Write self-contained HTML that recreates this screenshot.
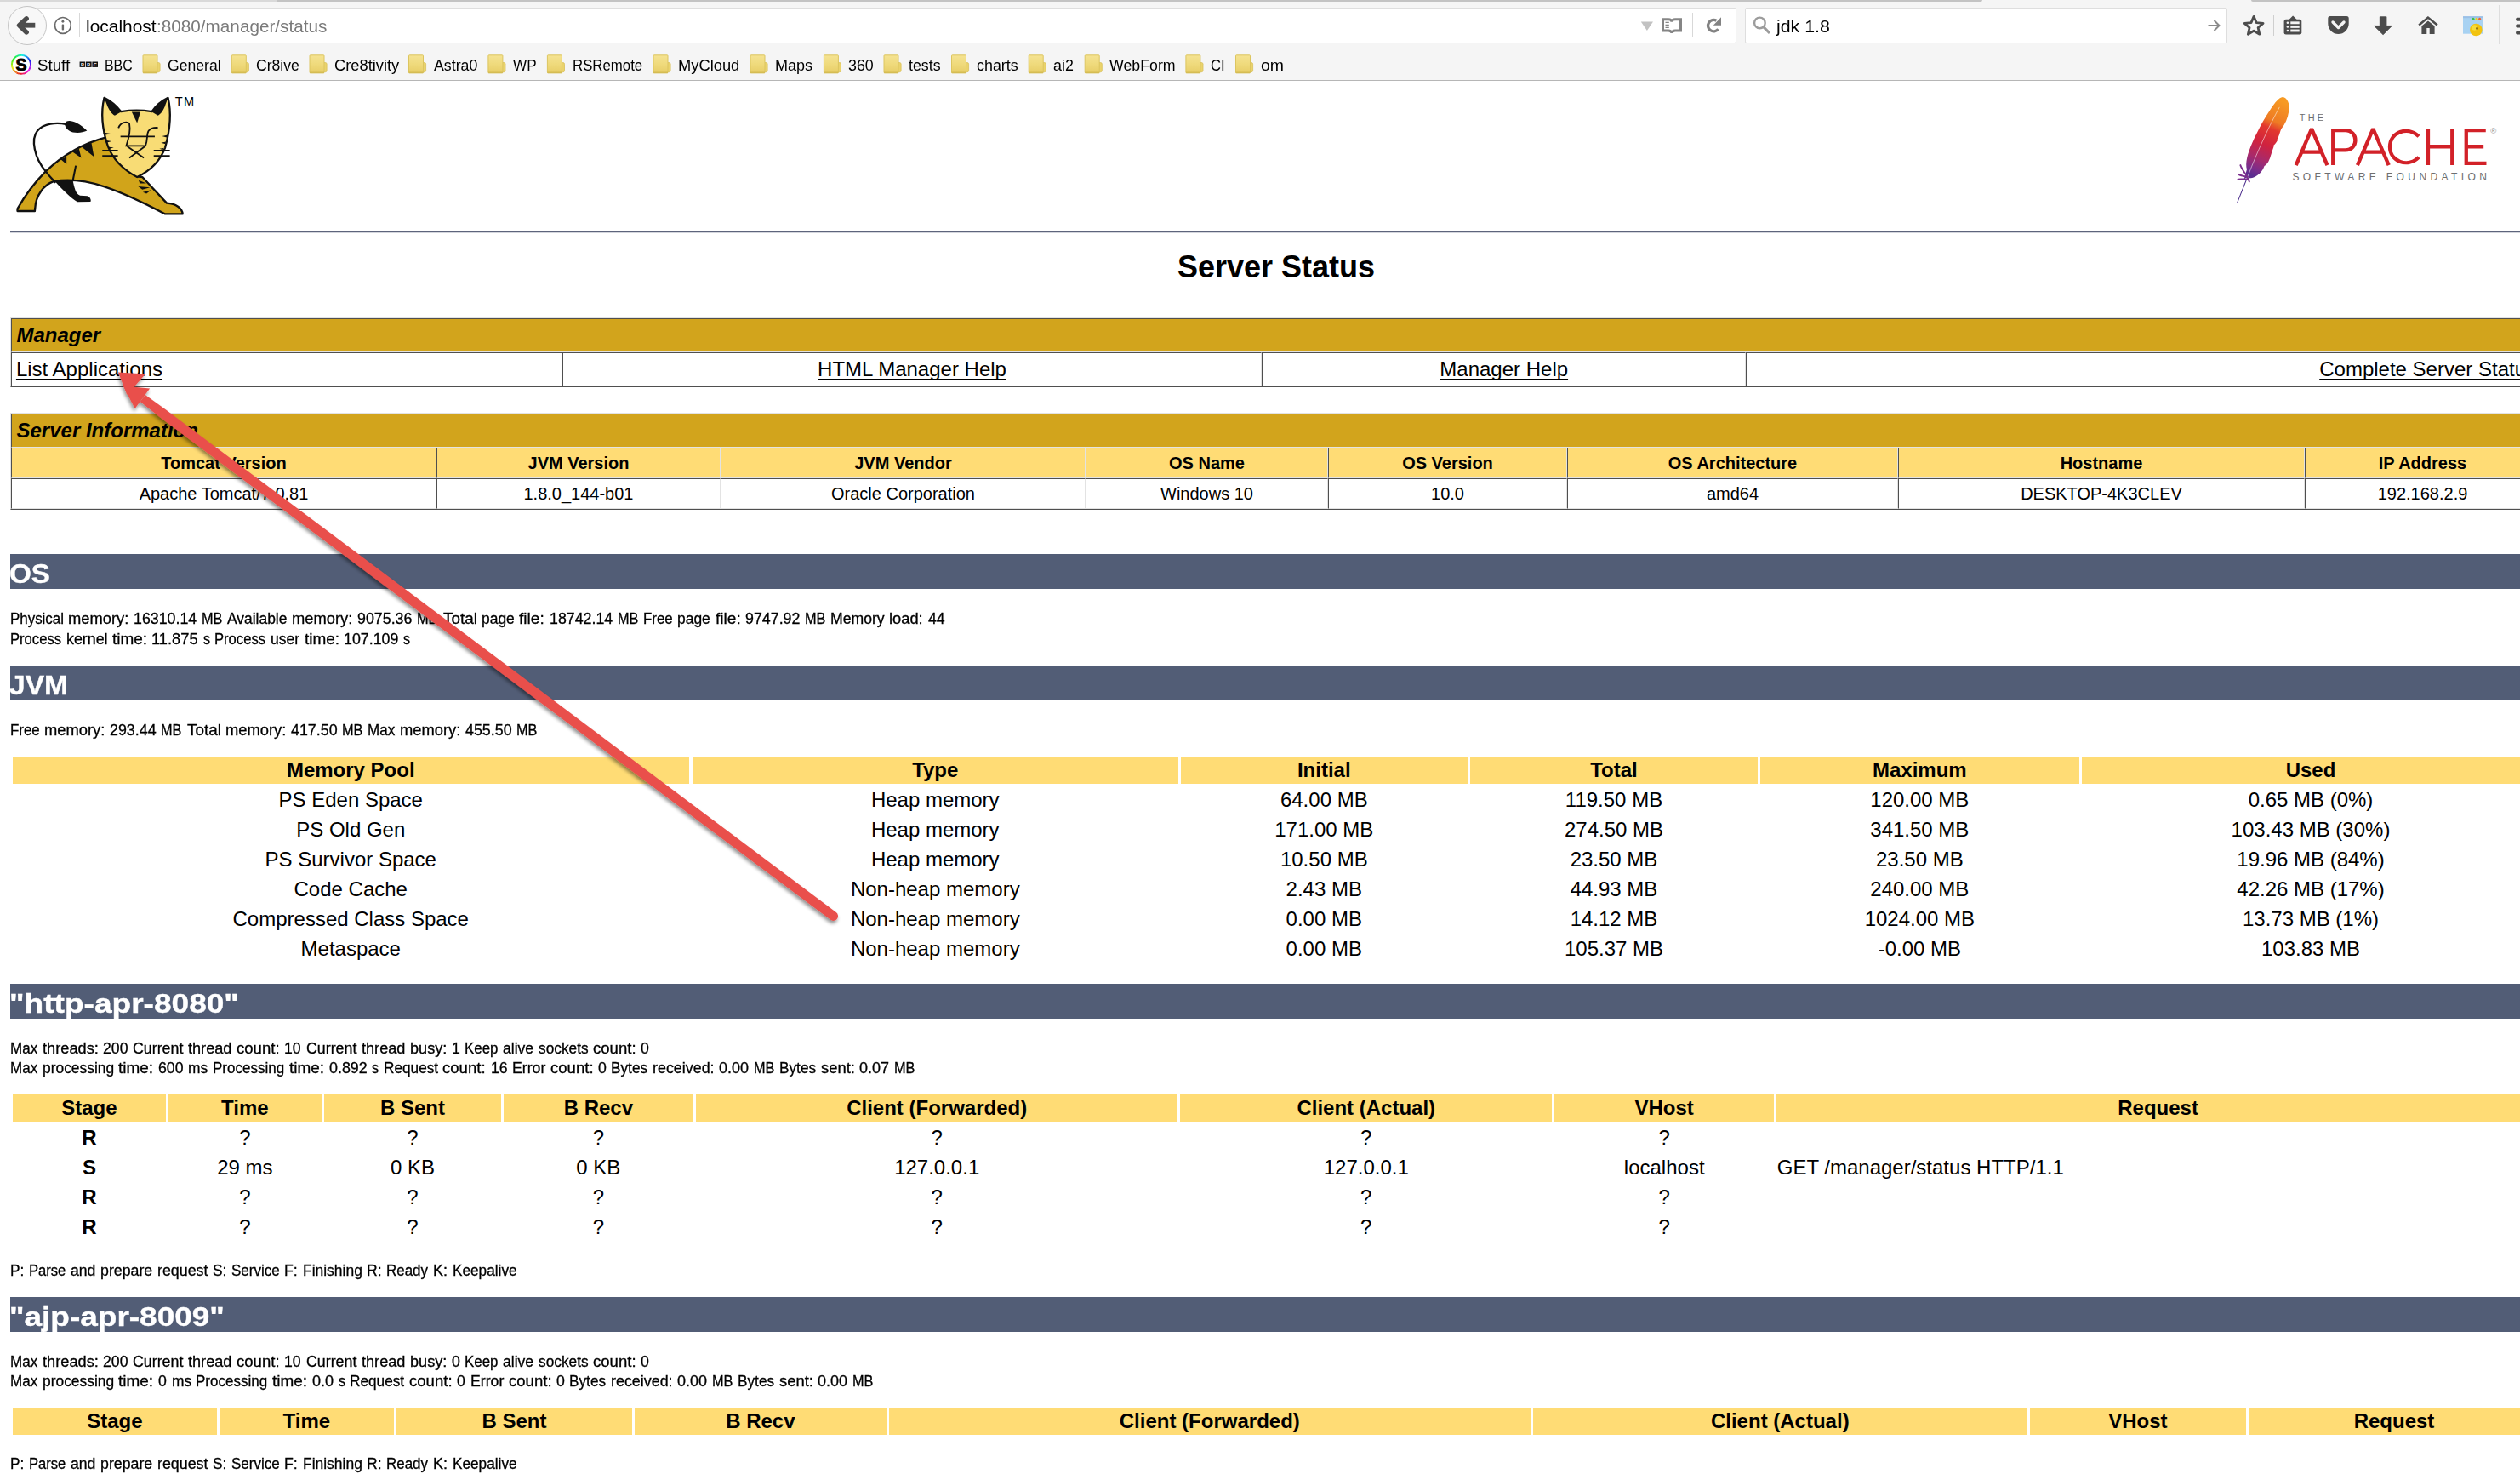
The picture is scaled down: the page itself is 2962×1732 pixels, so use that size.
<!DOCTYPE html>
<html><head><meta charset="utf-8"><title>/manager</title>
<style>
html,body{margin:0;padding:0;background:#fff;}
body{width:2962px;height:1732px;overflow:hidden;position:relative;font-family:"Liberation Sans", sans-serif;}
.b,.c,.tb,.t,svg{position:absolute;}
.b,.c,.tb{box-sizing:border-box;}
.c{border:1px solid;border-color:#4f4f4f #e3e3e3 #e3e3e3 #4f4f4f;}
.tb{border:1px solid;border-color:#e3e3e3 #4f4f4f #4f4f4f #e3e3e3;}
.t{white-space:pre;color:#000;text-decoration-skip-ink:none;text-underline-offset:3.3px;text-decoration-thickness:1.8px;}
</style></head><body>
<div class="b" style="left:0;top:0;width:2962px;height:94px;background:#f5f5f5"></div>
<div class="b" style="left:0;top:94px;width:2962px;height:1px;background:#b6b6b6"></div>
<div class="b" style="left:0;top:0;width:325px;height:2px;background:#d9d9d9"></div>
<div class="b" style="left:325px;top:0;width:2005px;height:2px;background:#c3c3c3;border-radius:0 0 14px 0"></div>
<div class="b" style="left:2646px;top:0;width:316px;height:2px;background:#c3c3c3;border-radius:0 0 0 14px"></div>
<div class="b" style="left:28px;top:9px;width:2013px;height:42px;background:#fff;border:1px solid #dedede;border-radius:2px"></div>
<div class="b" style="left:2050.5px;top:9px;width:567px;height:42px;background:#fff;border:1px solid #dedede;border-radius:2px"></div>
<div class="b" style="left:8.5px;top:6.5px;width:46px;height:46px;border-radius:50%;background:#f8f8f8;border:1px solid #c4c4c4"></div>
<svg width="2962" height="95" viewBox="0 0 2962 95" style="left:0;top:0">
<defs>
<linearGradient id="fg" x1="0" y1="0" x2="0" y2="1"><stop offset="0" stop-color="#f5e393"/><stop offset="0.5" stop-color="#efda7c"/><stop offset="1" stop-color="#e7cd66"/></linearGradient>
<linearGradient id="rb" x1="0" y1="0" x2="1" y2="1"><stop offset="0" stop-color="#35c46a"/><stop offset=".3" stop-color="#3b8cf0"/><stop offset=".55" stop-color="#a040e8"/><stop offset=".75" stop-color="#f0503c"/><stop offset="1" stop-color="#f4d21c"/></linearGradient>

</defs>
<path d="M41.3,29.7 H24" fill="none" stroke="#4c4c4c" stroke-width="5.8" stroke-linecap="butt"/>
<path d="M31.1,21.9 L22.6,29.7 L31.1,37.9" fill="none" stroke="#4c4c4c" stroke-width="5.6" stroke-linecap="round" stroke-linejoin="round"/>
<circle cx="73.9" cy="29.9" r="9.4" fill="none" stroke="#6a6a6a" stroke-width="1.7"/>
<circle cx="73.9" cy="25.2" r="1.45" fill="#6a6a6a"/><rect x="72.7" y="28.6" width="2.4" height="6.8" rx="1" fill="#6a6a6a"/>
<rect x="93" y="15" width="1" height="28" fill="#d8d8d8"/>
<rect x="1989" y="15" width="1" height="28" fill="#d8d8d8"/>
<path d="M1928.8,25.6 H1943 L1935.9,36 Z" fill="#c2c2c2"/>
<path d="M1954.5,22.8 H1961 Q1964.5,22.8 1965,25.5 Q1965.5,22.8 1969,22.8 H1975.5 V36 H1969 Q1965.8,36 1965,38.6 Q1964.2,36 1961,36 H1954.5 Z" fill="none" stroke="#858585" stroke-width="3" stroke-linejoin="miter" stroke-miterlimit="1.6"/>
<path d="M1957.5,26.3 H1961.8 M1957.5,29.4 H1961.8 M1957.5,32.4 H1961.8" stroke="#858585" stroke-width="1.3"/>
<path d="M2019.6,34.2 A6.7,6.7 0 1 1 2017.5,24.3" fill="none" stroke="#828282" stroke-width="3.3"/>
<path d="M2023,20.2 V29.7 H2013.8 Z" fill="#828282"/>
<circle cx="2068.4" cy="26.9" r="6.3" fill="none" stroke="#9c9c9c" stroke-width="2.4"/><path d="M2073,31.8 L2080,39" stroke="#9c9c9c" stroke-width="3.2"/>
<path d="M2595.5,30 H2608 M2602.5,24 L2608.5,30 L2602.5,36" fill="none" stroke="#8a8a8a" stroke-width="2"/>
<polygon points="2649.10,19.40 2652.22,26.61 2660.04,27.35 2654.14,32.54 2655.86,40.20 2649.10,36.20 2642.34,40.20 2644.06,32.54 2638.16,27.35 2645.98,26.61" fill="none" stroke="#4c4c4c" stroke-width="2.8" stroke-linejoin="round"/>
<rect x="2672" y="18" width="1" height="24" fill="#cfcfcf"/>
<path d="M2690.3,23.2 L2695.1,18.4 L2699.9,23.2 Z" fill="#4c4c4c"/><rect x="2684.6" y="22.8" width="20.7" height="17.6" rx="2.2" fill="#4c4c4c"/>
<circle cx="2688.9" cy="26.8" r="1.3" fill="#f5f5f5"/><rect x="2692.3" y="25.35" width="10.4" height="2.9" fill="#f5f5f5"/>
<circle cx="2688.9" cy="31.4" r="1.3" fill="#f5f5f5"/><rect x="2692.3" y="29.95" width="10.4" height="2.9" fill="#f5f5f5"/>
<circle cx="2688.9" cy="36.0" r="1.3" fill="#f5f5f5"/><rect x="2692.3" y="34.55" width="10.4" height="2.9" fill="#f5f5f5"/>
<path d="M2738.8,18.9 H2758.2 Q2760.7,18.9 2760.7,21.4 V27.8 A12.2,12.2 0 0 1 2736.3,27.8 V21.4 Q2736.3,18.9 2738.8,18.9 Z" fill="#4c4c4c"/>
<path d="M2742,26 L2748.5,32.5 L2755,26" fill="none" stroke="#f5f5f5" stroke-width="3.4" stroke-linecap="round" stroke-linejoin="round"/>
<path d="M2797.3,19.7 H2805 V30.4 H2811.4 L2801.1,40.8 L2790.6,30.4 H2797.3 Z" fill="#4c4c4c" stroke="#4c4c4c" stroke-width="0.8" stroke-linejoin="round"/>
<path d="M2843.2,29.6 L2853.9,20.6 L2864.8,29.6" fill="none" stroke="#4c4c4c" stroke-width="2.6" stroke-linejoin="miter"/>
<path d="M2846.4,30.6 L2853.9,24.4 L2861.6,30.6 V40.1 H2855.7 V33 H2852.3 V40.1 H2846.4 Z" fill="#4c4c4c"/>
<rect x="2895" y="19.2" width="24" height="20.5" fill="#a8d2f2"/><rect x="2895" y="19.2" width="24" height="2" fill="#9cc0e6"/>
<circle cx="2907" cy="22.3" r="1.5" fill="#3cbf4a"/><circle cx="2911" cy="22.3" r="1.5" fill="#f2d21a"/><circle cx="2914.6" cy="22.3" r="1.5" fill="#f06236"/>
<circle cx="2910.3" cy="35" r="7.3" fill="#f2c30f"/><circle cx="2908.5" cy="32.5" r="3.2" fill="#f7dc3a"/><circle cx="2911.5" cy="33.5" r="1.4" fill="#8a6a10"/>
<rect x="2937" y="6" width="1" height="46" fill="#dedede"/>
<rect x="2957" y="20.8" width="12" height="4" rx="2" fill="#4c4c4c"/>
<rect x="2957" y="28.6" width="12" height="4" rx="2" fill="#4c4c4c"/>
<rect x="2957" y="36.4" width="12" height="4" rx="2" fill="#4c4c4c"/>
<circle cx="25" cy="75.8" r="11" fill="#fff"/>
<path d="M24.89,64.80 A11,11 0 0 1 27.95,65.20" fill="none" stroke="hsl(178,85%,52%)" stroke-width="2"/>
<path d="M27.74,65.15 A11,11 0 0 1 30.59,66.33" fill="none" stroke="hsl(192,85%,52%)" stroke-width="2"/>
<path d="M30.40,66.22 A11,11 0 0 1 32.86,68.10" fill="none" stroke="hsl(208,85%,52%)" stroke-width="2"/>
<path d="M32.70,67.94 A11,11 0 0 1 34.58,70.40" fill="none" stroke="hsl(222,85%,52%)" stroke-width="2"/>
<path d="M34.47,70.21 A11,11 0 0 1 35.65,73.06" fill="none" stroke="hsl(238,85%,52%)" stroke-width="2"/>
<path d="M35.60,72.85 A11,11 0 0 1 36.00,75.91" fill="none" stroke="hsl(252,85%,52%)" stroke-width="2"/>
<path d="M36.00,75.69 A11,11 0 0 1 35.60,78.75" fill="none" stroke="hsl(268,85%,52%)" stroke-width="2"/>
<path d="M35.65,78.54 A11,11 0 0 1 34.47,81.39" fill="none" stroke="hsl(282,85%,52%)" stroke-width="2"/>
<path d="M34.58,81.20 A11,11 0 0 1 32.70,83.66" fill="none" stroke="hsl(298,85%,52%)" stroke-width="2"/>
<path d="M32.86,83.50 A11,11 0 0 1 30.40,85.38" fill="none" stroke="hsl(312,85%,52%)" stroke-width="2"/>
<path d="M30.59,85.27 A11,11 0 0 1 27.74,86.45" fill="none" stroke="hsl(328,85%,52%)" stroke-width="2"/>
<path d="M27.95,86.40 A11,11 0 0 1 24.89,86.80" fill="none" stroke="hsl(342,85%,52%)" stroke-width="2"/>
<path d="M25.11,86.80 A11,11 0 0 1 22.05,86.40" fill="none" stroke="hsl(358,85%,52%)" stroke-width="2"/>
<path d="M22.26,86.45 A11,11 0 0 1 19.41,85.27" fill="none" stroke="hsl(12,85%,52%)" stroke-width="2"/>
<path d="M19.60,85.38 A11,11 0 0 1 17.14,83.50" fill="none" stroke="hsl(28,85%,52%)" stroke-width="2"/>
<path d="M17.30,83.66 A11,11 0 0 1 15.42,81.20" fill="none" stroke="hsl(42,85%,52%)" stroke-width="2"/>
<path d="M15.53,81.39 A11,11 0 0 1 14.35,78.54" fill="none" stroke="hsl(58,85%,52%)" stroke-width="2"/>
<path d="M14.40,78.75 A11,11 0 0 1 14.00,75.69" fill="none" stroke="hsl(72,85%,52%)" stroke-width="2"/>
<path d="M14.00,75.91 A11,11 0 0 1 14.40,72.85" fill="none" stroke="hsl(88,85%,52%)" stroke-width="2"/>
<path d="M14.35,73.06 A11,11 0 0 1 15.53,70.21" fill="none" stroke="hsl(102,85%,52%)" stroke-width="2"/>
<path d="M15.42,70.40 A11,11 0 0 1 17.30,67.94" fill="none" stroke="hsl(118,85%,52%)" stroke-width="2"/>
<path d="M17.14,68.10 A11,11 0 0 1 19.60,66.22" fill="none" stroke="hsl(132,85%,52%)" stroke-width="2"/>
<path d="M19.41,66.33 A11,11 0 0 1 22.26,65.15" fill="none" stroke="hsl(148,85%,52%)" stroke-width="2"/>
<path d="M22.05,65.20 A11,11 0 0 1 25.11,64.80" fill="none" stroke="hsl(162,85%,52%)" stroke-width="2"/>
<text x="25" y="82.6" font-family="Liberation Sans, sans-serif" font-weight="700" font-size="19.5" text-anchor="middle" fill="#000" stroke="#000" stroke-width="0.9">S</text>
<rect x="93.6" y="72.5" width="6.6" height="6.4" fill="#111"/><text x="96.9" y="77.9" font-family="Liberation Sans, sans-serif" font-weight="700" font-size="5.6" text-anchor="middle" fill="#fff">B</text>
<rect x="101.0" y="72.5" width="6.6" height="6.4" fill="#111"/><text x="104.3" y="77.9" font-family="Liberation Sans, sans-serif" font-weight="700" font-size="5.6" text-anchor="middle" fill="#fff">B</text>
<rect x="108.4" y="72.5" width="6.6" height="6.4" fill="#111"/><text x="111.7" y="77.9" font-family="Liberation Sans, sans-serif" font-weight="700" font-size="5.6" text-anchor="middle" fill="#fff">C</text>
<g transform="translate(167.5,64.3)"><path d="M17,9.2 H18.8 Q20.6,9.2 20.6,11 V18.6 Q20.6,20.4 18.8,20.4 H17 Z" fill="#ead36c" stroke="#d9c05a" stroke-width="0.8"/><rect x="0.5" y="0.5" width="17" height="21" rx="0.8" fill="url(#fg)" stroke="#dcc560" stroke-width="1"/><rect x="0.5" y="20.2" width="17" height="1.6" fill="#d2b84e" opacity=".8"/></g>
<g transform="translate(271.8,64.3)"><path d="M17,9.2 H18.8 Q20.6,9.2 20.6,11 V18.6 Q20.6,20.4 18.8,20.4 H17 Z" fill="#ead36c" stroke="#d9c05a" stroke-width="0.8"/><rect x="0.5" y="0.5" width="17" height="21" rx="0.8" fill="url(#fg)" stroke="#dcc560" stroke-width="1"/><rect x="0.5" y="20.2" width="17" height="1.6" fill="#d2b84e" opacity=".8"/></g>
<g transform="translate(363.5,64.3)"><path d="M17,9.2 H18.8 Q20.6,9.2 20.6,11 V18.6 Q20.6,20.4 18.8,20.4 H17 Z" fill="#ead36c" stroke="#d9c05a" stroke-width="0.8"/><rect x="0.5" y="0.5" width="17" height="21" rx="0.8" fill="url(#fg)" stroke="#dcc560" stroke-width="1"/><rect x="0.5" y="20.2" width="17" height="1.6" fill="#d2b84e" opacity=".8"/></g>
<g transform="translate(480.0,64.3)"><path d="M17,9.2 H18.8 Q20.6,9.2 20.6,11 V18.6 Q20.6,20.4 18.8,20.4 H17 Z" fill="#ead36c" stroke="#d9c05a" stroke-width="0.8"/><rect x="0.5" y="0.5" width="17" height="21" rx="0.8" fill="url(#fg)" stroke="#dcc560" stroke-width="1"/><rect x="0.5" y="20.2" width="17" height="1.6" fill="#d2b84e" opacity=".8"/></g>
<g transform="translate(573.4,64.3)"><path d="M17,9.2 H18.8 Q20.6,9.2 20.6,11 V18.6 Q20.6,20.4 18.8,20.4 H17 Z" fill="#ead36c" stroke="#d9c05a" stroke-width="0.8"/><rect x="0.5" y="0.5" width="17" height="21" rx="0.8" fill="url(#fg)" stroke="#dcc560" stroke-width="1"/><rect x="0.5" y="20.2" width="17" height="1.6" fill="#d2b84e" opacity=".8"/></g>
<g transform="translate(642.9,64.3)"><path d="M17,9.2 H18.8 Q20.6,9.2 20.6,11 V18.6 Q20.6,20.4 18.8,20.4 H17 Z" fill="#ead36c" stroke="#d9c05a" stroke-width="0.8"/><rect x="0.5" y="0.5" width="17" height="21" rx="0.8" fill="url(#fg)" stroke="#dcc560" stroke-width="1"/><rect x="0.5" y="20.2" width="17" height="1.6" fill="#d2b84e" opacity=".8"/></g>
<g transform="translate(767.5,64.3)"><path d="M17,9.2 H18.8 Q20.6,9.2 20.6,11 V18.6 Q20.6,20.4 18.8,20.4 H17 Z" fill="#ead36c" stroke="#d9c05a" stroke-width="0.8"/><rect x="0.5" y="0.5" width="17" height="21" rx="0.8" fill="url(#fg)" stroke="#dcc560" stroke-width="1"/><rect x="0.5" y="20.2" width="17" height="1.6" fill="#d2b84e" opacity=".8"/></g>
<g transform="translate(881.5,64.3)"><path d="M17,9.2 H18.8 Q20.6,9.2 20.6,11 V18.6 Q20.6,20.4 18.8,20.4 H17 Z" fill="#ead36c" stroke="#d9c05a" stroke-width="0.8"/><rect x="0.5" y="0.5" width="17" height="21" rx="0.8" fill="url(#fg)" stroke="#dcc560" stroke-width="1"/><rect x="0.5" y="20.2" width="17" height="1.6" fill="#d2b84e" opacity=".8"/></g>
<g transform="translate(967.9,64.3)"><path d="M17,9.2 H18.8 Q20.6,9.2 20.6,11 V18.6 Q20.6,20.4 18.8,20.4 H17 Z" fill="#ead36c" stroke="#d9c05a" stroke-width="0.8"/><rect x="0.5" y="0.5" width="17" height="21" rx="0.8" fill="url(#fg)" stroke="#dcc560" stroke-width="1"/><rect x="0.5" y="20.2" width="17" height="1.6" fill="#d2b84e" opacity=".8"/></g>
<g transform="translate(1038.5,64.3)"><path d="M17,9.2 H18.8 Q20.6,9.2 20.6,11 V18.6 Q20.6,20.4 18.8,20.4 H17 Z" fill="#ead36c" stroke="#d9c05a" stroke-width="0.8"/><rect x="0.5" y="0.5" width="17" height="21" rx="0.8" fill="url(#fg)" stroke="#dcc560" stroke-width="1"/><rect x="0.5" y="20.2" width="17" height="1.6" fill="#d2b84e" opacity=".8"/></g>
<g transform="translate(1118.0,64.3)"><path d="M17,9.2 H18.8 Q20.6,9.2 20.6,11 V18.6 Q20.6,20.4 18.8,20.4 H17 Z" fill="#ead36c" stroke="#d9c05a" stroke-width="0.8"/><rect x="0.5" y="0.5" width="17" height="21" rx="0.8" fill="url(#fg)" stroke="#dcc560" stroke-width="1"/><rect x="0.5" y="20.2" width="17" height="1.6" fill="#d2b84e" opacity=".8"/></g>
<g transform="translate(1208.7,64.3)"><path d="M17,9.2 H18.8 Q20.6,9.2 20.6,11 V18.6 Q20.6,20.4 18.8,20.4 H17 Z" fill="#ead36c" stroke="#d9c05a" stroke-width="0.8"/><rect x="0.5" y="0.5" width="17" height="21" rx="0.8" fill="url(#fg)" stroke="#dcc560" stroke-width="1"/><rect x="0.5" y="20.2" width="17" height="1.6" fill="#d2b84e" opacity=".8"/></g>
<g transform="translate(1274.7,64.3)"><path d="M17,9.2 H18.8 Q20.6,9.2 20.6,11 V18.6 Q20.6,20.4 18.8,20.4 H17 Z" fill="#ead36c" stroke="#d9c05a" stroke-width="0.8"/><rect x="0.5" y="0.5" width="17" height="21" rx="0.8" fill="url(#fg)" stroke="#dcc560" stroke-width="1"/><rect x="0.5" y="20.2" width="17" height="1.6" fill="#d2b84e" opacity=".8"/></g>
<g transform="translate(1393.4,64.3)"><path d="M17,9.2 H18.8 Q20.6,9.2 20.6,11 V18.6 Q20.6,20.4 18.8,20.4 H17 Z" fill="#ead36c" stroke="#d9c05a" stroke-width="0.8"/><rect x="0.5" y="0.5" width="17" height="21" rx="0.8" fill="url(#fg)" stroke="#dcc560" stroke-width="1"/><rect x="0.5" y="20.2" width="17" height="1.6" fill="#d2b84e" opacity=".8"/></g>
<g transform="translate(1452.0,64.3)"><path d="M17,9.2 H18.8 Q20.6,9.2 20.6,11 V18.6 Q20.6,20.4 18.8,20.4 H17 Z" fill="#ead36c" stroke="#d9c05a" stroke-width="0.8"/><rect x="0.5" y="0.5" width="17" height="21" rx="0.8" fill="url(#fg)" stroke="#dcc560" stroke-width="1"/><rect x="0.5" y="20.2" width="17" height="1.6" fill="#d2b84e" opacity=".8"/></g>
</svg>
<div class="b" style="left:12px;top:272px;width:2978px;height:1px;background:#5d647c"></div>
<div class="b" style="left:12px;top:273px;width:2978px;height:1px;background:#d4d6dd"></div>
<svg width="300" height="180" viewBox="0 0 2457 1474" style="left:0;top:100px">
<path d="M625,370 C635,325 730,330 838,438 C760,475 635,465 622,372 Z" fill="#111"/>
<path d="M520,915 L700,912 C715,990 730,1050 770,1062 L840,1066 C875,1075 880,1120 870,1122 L745,1125 C690,1090 600,1010 520,915 Z" fill="#111"/>
<path d="M1015,505 C800,560 600,680 440,830 C330,940 230,1080 168,1190 L168,1212 L335,1212 L338,1185 C345,1060 420,960 520,925 C640,905 800,910 1000,975 C1200,1040 1400,1140 1590,1240 L1758,1240 C1755,1190 1700,1140 1605,1135 L1370,885 L1320,880 Z" fill="#D1A41A" stroke="#111" stroke-width="19" stroke-linejoin="round"/>
<path d="M535,940 C500,900 470,870 440,830 C330,700 295,520 360,440 C420,370 540,355 640,378" fill="none" stroke="#111" stroke-width="19"/>
<path d="M780,590 L880,555 L905,690 Z M695,640 L760,612 L782,700 Z M585,715 L640,690 L640,762 Z" fill="#111"/>
<path d="M730,775 L700,925" stroke="#111" stroke-width="17" fill="none"/>
<path d="M1335,915 L1410,945 L1345,945 Z M1330,975 L1445,985 L1370,1005 Z M1375,1030 L1455,1010 L1410,1045 Z" fill="#111"/>
<path d="M1003,122 C1060,150 1120,200 1165,255 C1260,240 1370,240 1462,255 C1500,200 1560,150 1618,122 C1650,260 1640,420 1590,600 C1540,740 1430,830 1320,885 C1200,820 1090,720 1040,590 C985,430 970,260 1003,122 Z" fill="#F8DC75" stroke="#111" stroke-width="19" stroke-linejoin="round"/>
<path d="M1006,128 C1070,160 1125,205 1165,258 L1105,292 C1075,280 1045,230 1030,190 Z" fill="#111"/>
<path d="M1615,128 C1555,160 1500,205 1462,258 L1520,292 C1550,280 1580,230 1592,190 Z" fill="#111"/>
<path d="M1268,258 L1352,258 L1320,365 Z" fill="#111"/>
<path d="M1140,412 C1160,360 1220,345 1245,370 C1255,420 1245,500 1215,585 L1400,585 C1425,520 1410,470 1430,440 C1450,415 1490,408 1520,410" fill="none" stroke="#111" stroke-width="15"/>
<path d="M1160,495 H1490" stroke="#111" stroke-width="15"/>
<path d="M1225,590 L1385,700 M1395,590 L1245,700" stroke="#111" stroke-width="15"/>
<path d="M985,630 H1135 M985,682 H1135 M1480,630 H1635 M1480,682 H1635" stroke="#111" stroke-width="15"/>
<path d="M995,455 L1075,468 L1000,482 Z M1015,530 L1075,540 L1022,555 Z M1045,595 L1095,600 L1055,615 Z M1615,480 L1560,492 L1612,505 Z M1598,545 L1550,555 L1592,568 Z M1575,605 L1535,612 L1568,625 Z" fill="#111"/>
</svg>
<span class="t" style="left:205.8px;top:110.5px;font-size:14.6px;line-height:16px;letter-spacing:1.2px">TM</span>
<svg width="362" height="160" viewBox="0 0 2520 1114" style="left:2600px;top:100px">
<defs><linearGradient id="fe" x1="0.62" y1="0" x2="0.38" y2="1">
<stop offset="0" stop-color="#F79A23"/><stop offset="0.27" stop-color="#EE7A24"/><stop offset="0.37" stop-color="#E2372E"/><stop offset="0.58" stop-color="#D0223F"/><stop offset="0.78" stop-color="#A72A6C"/><stop offset="0.92" stop-color="#7A2D8C"/><stop offset="1" stop-color="#5B2E90"/></linearGradient></defs>
<path d="M582,97 C615,105 640,150 628,215 C620,270 598,320 565,360 L560,375 C545,420 540,440 528,450 L535,455 C520,480 510,490 498,498 L505,503 C490,540 480,590 462,625 C450,645 440,655 428,662 C415,700 390,735 340,755 C320,765 300,760 290,752 L262,770 L285,690 C270,640 290,560 330,470 C380,360 450,230 520,140 C545,110 565,95 582,97 Z" fill="url(#fe)"/>
<path d="M290,752 L205,965" stroke="#4B2D8C" stroke-width="7" stroke-linecap="round"/>
<path d="M552,180 C470,330 380,520 290,752" stroke="#fff" stroke-opacity=".75" stroke-width="5" fill="none"/>
<path d="M290,752 C270,720 245,690 232,655 M290,752 C260,745 235,740 215,730 M285,770 C260,770 235,768 212,770 M292,760 L305,790" stroke="#7B2F8E" stroke-width="13" fill="none" stroke-linecap="round"/>
<g fill="none" stroke="#D22128" stroke-width="30" stroke-linejoin="miter" stroke-miterlimit="2">
<path d="M687,655 L815,358 L943,655 M737,548 H893"/>
<path d="M990,655 V370 H1090 C1200,370 1200,532 1090,532 H990"/>
<path d="M1190,655 L1318,358 L1446,655 M1240,548 H1396"/>
<path d="M1692,420 C1600,330 1455,385 1455,505 C1455,625 1600,680 1692,590"/>
<path d="M1768,355 V655 M1965,355 V655 M1768,503 H1965"/>
<path d="M2240,370 H2080 V640 H2245 M2080,503 H2222"/>
</g>
<text x="716" y="295" font-family="Liberation Sans, sans-serif" font-size="76" letter-spacing="22" fill="#6e6e70">THE</text>
<text x="657" y="779" font-family="Liberation Sans, sans-serif" font-size="84" letter-spacing="30.4" fill="#6e6e70">SOFTWARE FOUNDATION</text>
<text x="2278" y="398" font-family="Liberation Sans, sans-serif" font-size="66" fill="#8a8a8a">®</text>
</svg>
<div class="tb" style="left:12px;top:373px;width:2978px;height:82px"></div>
<div class="c" style="left:13px;top:374px;width:2976px;height:40px;background:#D2A41C"></div>
<div class="c" style="left:13px;top:414px;width:648px;height:40px;background:#fff"></div>
<div class="c" style="left:661px;top:414px;width:822px;height:40px;background:#fff"></div>
<div class="c" style="left:1483px;top:414px;width:569px;height:40px;background:#fff"></div>
<div class="c" style="left:2052px;top:414px;width:937px;height:40px;background:#fff"></div>
<div class="tb" style="left:12px;top:485px;width:2978px;height:114px"></div>
<div class="c" style="left:13px;top:486px;width:2976px;height:40px;background:#D2A41C"></div>
<div class="c" style="left:13px;top:526px;width:500px;height:36px;background:#FFDC75"></div>
<div class="c" style="left:13px;top:562px;width:500px;height:36px;background:#fff"></div>
<div class="c" style="left:513px;top:526px;width:334px;height:36px;background:#FFDC75"></div>
<div class="c" style="left:513px;top:562px;width:334px;height:36px;background:#fff"></div>
<div class="c" style="left:847px;top:526px;width:429px;height:36px;background:#FFDC75"></div>
<div class="c" style="left:847px;top:562px;width:429px;height:36px;background:#fff"></div>
<div class="c" style="left:1276px;top:526px;width:285px;height:36px;background:#FFDC75"></div>
<div class="c" style="left:1276px;top:562px;width:285px;height:36px;background:#fff"></div>
<div class="c" style="left:1561px;top:526px;width:281px;height:36px;background:#FFDC75"></div>
<div class="c" style="left:1561px;top:562px;width:281px;height:36px;background:#fff"></div>
<div class="c" style="left:1842px;top:526px;width:389px;height:36px;background:#FFDC75"></div>
<div class="c" style="left:1842px;top:562px;width:389px;height:36px;background:#fff"></div>
<div class="c" style="left:2231px;top:526px;width:478px;height:36px;background:#FFDC75"></div>
<div class="c" style="left:2231px;top:562px;width:478px;height:36px;background:#fff"></div>
<div class="c" style="left:2709px;top:526px;width:280px;height:36px;background:#FFDC75"></div>
<div class="c" style="left:2709px;top:562px;width:280px;height:36px;background:#fff"></div>
<div class="b" style="left:12px;top:651px;width:2978px;height:41px;background:#525D76;"></div>
<div class="b" style="left:12px;top:782px;width:2978px;height:41px;background:#525D76;"></div>
<div class="b" style="left:12px;top:1156px;width:2978px;height:41px;background:#525D76;"></div>
<div class="b" style="left:12px;top:1524px;width:2978px;height:41px;background:#525D76;"></div>
<div class="b" style="left:15px;top:889px;width:795px;height:32px;background:#FFDC75;"></div>
<div class="b" style="left:814px;top:889px;width:571px;height:32px;background:#FFDC75;"></div>
<div class="b" style="left:1388px;top:889px;width:337px;height:32px;background:#FFDC75;"></div>
<div class="b" style="left:1728px;top:889px;width:338px;height:32px;background:#FFDC75;"></div>
<div class="b" style="left:2069px;top:889px;width:375px;height:32px;background:#FFDC75;"></div>
<div class="b" style="left:2447px;top:889px;width:538px;height:32px;background:#FFDC75;"></div>
<div class="b" style="left:15px;top:1286px;width:180px;height:32px;background:#FFDC75;"></div>
<div class="b" style="left:198px;top:1286px;width:180px;height:32px;background:#FFDC75;"></div>
<div class="b" style="left:381px;top:1286px;width:208px;height:32px;background:#FFDC75;"></div>
<div class="b" style="left:592px;top:1286px;width:223px;height:32px;background:#FFDC75;"></div>
<div class="b" style="left:818px;top:1286px;width:566px;height:32px;background:#FFDC75;"></div>
<div class="b" style="left:1387px;top:1286px;width:437px;height:32px;background:#FFDC75;"></div>
<div class="b" style="left:1827px;top:1286px;width:258px;height:32px;background:#FFDC75;"></div>
<div class="b" style="left:2088px;top:1286px;width:897px;height:32px;background:#FFDC75;"></div>
<div class="b" style="left:15px;top:1654px;width:240px;height:32px;background:#FFDC75;"></div>
<div class="b" style="left:258px;top:1654px;width:205px;height:32px;background:#FFDC75;"></div>
<div class="b" style="left:466px;top:1654px;width:277px;height:32px;background:#FFDC75;"></div>
<div class="b" style="left:746px;top:1654px;width:296px;height:32px;background:#FFDC75;"></div>
<div class="b" style="left:1045px;top:1654px;width:754px;height:32px;background:#FFDC75;"></div>
<div class="b" style="left:1802px;top:1654px;width:581px;height:32px;background:#FFDC75;"></div>
<div class="b" style="left:2386px;top:1654px;width:254px;height:32px;background:#FFDC75;"></div>
<div class="b" style="left:2643px;top:1654px;width:342px;height:32px;background:#FFDC75;"></div>
<span class="t" style="left:43.96px;top:66.36px;font-size:18.0px;line-height:23px;transform:scaleX(1.0386);transform-origin:0 50%;">Stuff</span>
<span class="t" style="left:123.09px;top:66.36px;font-size:18.0px;line-height:23px;transform:scaleX(0.8812);transform-origin:0 50%;">BBC</span>
<span class="t" style="left:196.81px;top:66.36px;font-size:18.0px;line-height:23px;transform:scaleX(0.9793);transform-origin:0 50%;">General</span>
<span class="t" style="left:300.81px;top:66.36px;font-size:18.0px;line-height:23px;transform:scaleX(0.9770);transform-origin:0 50%;">Cr8ive</span>
<span class="t" style="left:392.88px;top:66.36px;font-size:18.0px;line-height:23px;transform:scaleX(1.0161);transform-origin:0 50%;">Cre8tivity</span>
<span class="t" style="left:510.20px;top:66.36px;font-size:18.0px;line-height:23px;transform:scaleX(0.9863);transform-origin:0 50%;">Astra0</span>
<span class="t" style="left:603.23px;top:66.36px;font-size:18.0px;line-height:23px;transform:scaleX(0.9524);transform-origin:0 50%;">WP</span>
<span class="t" style="left:672.64px;top:66.36px;font-size:18.0px;line-height:23px;transform:scaleX(0.9340);transform-origin:0 50%;">RSRemote</span>
<span class="t" style="left:796.78px;top:66.36px;font-size:18.0px;line-height:23px;transform:scaleX(1.0181);transform-origin:0 50%;">MyCloud</span>
<span class="t" style="left:911.19px;top:66.36px;font-size:18.0px;line-height:23px;transform:scaleX(1.0024);transform-origin:0 50%;">Maps</span>
<span class="t" style="left:997.10px;top:66.36px;font-size:18.0px;line-height:23px;transform:scaleX(0.9891);transform-origin:0 50%;">360</span>
<span class="t" style="left:1068.20px;top:66.36px;font-size:18.0px;line-height:23px;transform:scaleX(0.9896);transform-origin:0 50%;">tests</span>
<span class="t" style="left:1147.70px;top:66.36px;font-size:18.0px;line-height:23px;transform:scaleX(0.9937);transform-origin:0 50%;">charts</span>
<span class="t" style="left:1238.00px;top:66.36px;font-size:18.0px;line-height:23px;transform:scaleX(0.9912);transform-origin:0 50%;">ai2</span>
<span class="t" style="left:1304.00px;top:66.36px;font-size:18.0px;line-height:23px;transform:scaleX(0.9864);transform-origin:0 50%;">WebForm</span>
<span class="t" style="left:1423.25px;top:66.36px;font-size:18.0px;line-height:23px;transform:scaleX(0.9233);transform-origin:0 50%;">CI</span>
<span class="t" style="left:1481.53px;top:66.36px;font-size:18.0px;line-height:23px;transform:scaleX(1.0801);transform-origin:0 50%;">om</span>
<span class="t" style="left:2087.64px;top:17.36px;font-size:20.6px;line-height:27px;transform:scaleX(1.0357);transform-origin:0 50%;">jdk 1.8</span>
<span class="t" style="left:101.26px;top:17.26px;font-size:20.6px;line-height:27px;transform:scaleX(1.0169);transform-origin:0 50%;">localhost</span>
<span class="t" style="left:183.57px;top:17.26px;font-size:20.6px;line-height:27px;color:#7a7a7a;transform:scaleX(1.0058);transform-origin:0 50%;">:8080/manager/status</span>
<span class="t" style="left:1383.94px;top:289.63px;font-size:36px;line-height:47px;font-weight:700;">Server Status</span>
<span class="t" style="left:19.52px;top:378.18px;font-size:24px;line-height:31px;font-weight:700;font-style:italic;">Manager</span>
<span class="t" style="left:18.92px;top:418.18px;font-size:24px;line-height:31px;text-decoration:underline;">List Applications</span>
<span class="t" style="left:961.07px;top:418.18px;font-size:24px;line-height:31px;text-decoration:underline;">HTML Manager Help</span>
<span class="t" style="left:1692.33px;top:418.18px;font-size:24px;line-height:31px;text-decoration:underline;">Manager Help</span>
<span class="t" style="left:2726.22px;top:418.18px;font-size:24px;line-height:31px;text-decoration:underline;">Complete Server Status</span>
<span class="t" style="left:19.52px;top:489.98px;font-size:24px;line-height:31px;font-weight:700;font-style:italic;">Server Information</span>
<span class="t" style="left:189.27px;top:530.97px;font-size:20px;line-height:26px;font-weight:700;">Tomcat Version</span>
<span class="t" style="left:163.67px;top:566.67px;font-size:20px;line-height:26px;">Apache Tomcat/7.0.81</span>
<span class="t" style="left:620.53px;top:530.97px;font-size:20px;line-height:26px;font-weight:700;">JVM Version</span>
<span class="t" style="left:615.49px;top:566.67px;font-size:20px;line-height:26px;">1.8.0_144-b01</span>
<span class="t" style="left:1004.26px;top:530.97px;font-size:20px;line-height:26px;font-weight:700;">JVM Vendor</span>
<span class="t" style="left:977.02px;top:566.67px;font-size:20px;line-height:26px;">Oracle Corporation</span>
<span class="t" style="left:1374.03px;top:530.97px;font-size:20px;line-height:26px;font-weight:700;">OS Name</span>
<span class="t" style="left:1364.03px;top:566.67px;font-size:20px;line-height:26px;">Windows 10</span>
<span class="t" style="left:1648.14px;top:530.97px;font-size:20px;line-height:26px;font-weight:700;">OS Version</span>
<span class="t" style="left:1682.03px;top:566.67px;font-size:20px;line-height:26px;">10.0</span>
<span class="t" style="left:1960.73px;top:530.97px;font-size:20px;line-height:26px;font-weight:700;">OS Architecture</span>
<span class="t" style="left:2005.92px;top:566.67px;font-size:20px;line-height:26px;">amd64</span>
<span class="t" style="left:2421.65px;top:530.97px;font-size:20px;line-height:26px;font-weight:700;">Hostname</span>
<span class="t" style="left:2375.14px;top:566.67px;font-size:20px;line-height:26px;">DESKTOP-4K3CLEV</span>
<span class="t" style="left:2795.80px;top:530.97px;font-size:20px;line-height:26px;font-weight:700;">IP Address</span>
<span class="t" style="left:2794.67px;top:566.67px;font-size:20px;line-height:26px;">192.168.2.9</span>
<span class="t" style="left:11.21px;top:654.15px;font-size:31.6px;line-height:41px;font-weight:700;color:#fff;-webkit-text-stroke:0.4px #fff;transform:scaleX(1.0501);transform-origin:0 50%;">OS</span>
<span class="t" style="left:10.79px;top:785.15px;font-size:31.6px;line-height:41px;font-weight:700;color:#fff;-webkit-text-stroke:0.4px #fff;transform:scaleX(1.0627);transform-origin:0 50%;">JVM</span>
<span class="t" style="left:11.03px;top:1159.25px;font-size:31.6px;line-height:41px;font-weight:700;color:#fff;-webkit-text-stroke:0.4px #fff;transform:scaleX(1.1732);transform-origin:0 50%;">&quot;http-apr-8080&quot;</span>
<span class="t" style="left:11.04px;top:1527.15px;font-size:31.6px;line-height:41px;font-weight:700;color:#fff;-webkit-text-stroke:0.4px #fff;transform:scaleX(1.1700);transform-origin:0 50%;">&quot;ajp-apr-8009&quot;</span>
<span class="t" style="left:11.90px;top:716.46px;font-size:18.0px;line-height:23px;-webkit-text-stroke:0.3px #000;transform:scaleX(0.9392);transform-origin:0 50%;">Physical</span>
<span class="t" style="left:80.48px;top:716.46px;font-size:18.0px;line-height:23px;-webkit-text-stroke:0.3px #000;transform:scaleX(1.0186);transform-origin:0 50%;">memory:</span>
<span class="t" style="left:157.42px;top:716.46px;font-size:18.0px;line-height:23px;-webkit-text-stroke:0.3px #000;transform:scaleX(0.9887);transform-origin:0 50%;">16310.14</span>
<span class="t" style="left:237.28px;top:716.46px;font-size:18.0px;line-height:23px;-webkit-text-stroke:0.3px #000;transform:scaleX(0.9066);transform-origin:0 50%;">MB</span>
<span class="t" style="left:267.38px;top:716.46px;font-size:18.0px;line-height:23px;-webkit-text-stroke:0.3px #000;transform:scaleX(0.9682);transform-origin:0 50%;">Available</span>
<span class="t" style="left:343.42px;top:716.46px;font-size:18.0px;line-height:23px;-webkit-text-stroke:0.3px #000;transform:scaleX(1.0186);transform-origin:0 50%;">memory:</span>
<span class="t" style="left:420.36px;top:716.46px;font-size:18.0px;line-height:23px;-webkit-text-stroke:0.3px #000;transform:scaleX(0.9897);transform-origin:0 50%;">9075.36</span>
<span class="t" style="left:490.39px;top:716.46px;font-size:18.0px;line-height:23px;-webkit-text-stroke:0.3px #000;transform:scaleX(0.9066);transform-origin:0 50%;">MB</span>
<span class="t" style="left:520.50px;top:716.46px;font-size:18.0px;line-height:23px;-webkit-text-stroke:0.3px #000;transform:scaleX(1.0490);transform-origin:0 50%;">Total</span>
<span class="t" style="left:566.02px;top:716.46px;font-size:18.0px;line-height:23px;-webkit-text-stroke:0.3px #000;transform:scaleX(0.9692);transform-origin:0 50%;">page</span>
<span class="t" style="left:610.45px;top:716.46px;font-size:18.0px;line-height:23px;-webkit-text-stroke:0.3px #000;transform:scaleX(1.0619);transform-origin:0 50%;">file:</span>
<span class="t" style="left:645.83px;top:716.46px;font-size:18.0px;line-height:23px;-webkit-text-stroke:0.3px #000;transform:scaleX(0.9887);transform-origin:0 50%;">18742.14</span>
<span class="t" style="left:725.69px;top:716.46px;font-size:18.0px;line-height:23px;-webkit-text-stroke:0.3px #000;transform:scaleX(0.9066);transform-origin:0 50%;">MB</span>
<span class="t" style="left:755.79px;top:716.46px;font-size:18.0px;line-height:23px;-webkit-text-stroke:0.3px #000;transform:scaleX(0.9398);transform-origin:0 50%;">Free</span>
<span class="t" style="left:796.20px;top:716.46px;font-size:18.0px;line-height:23px;-webkit-text-stroke:0.3px #000;transform:scaleX(0.9692);transform-origin:0 50%;">page</span>
<span class="t" style="left:840.64px;top:716.46px;font-size:18.0px;line-height:23px;-webkit-text-stroke:0.3px #000;transform:scaleX(1.0619);transform-origin:0 50%;">file:</span>
<span class="t" style="left:876.01px;top:716.46px;font-size:18.0px;line-height:23px;-webkit-text-stroke:0.3px #000;transform:scaleX(0.9897);transform-origin:0 50%;">9747.92</span>
<span class="t" style="left:946.05px;top:716.46px;font-size:18.0px;line-height:23px;-webkit-text-stroke:0.3px #000;transform:scaleX(0.9066);transform-origin:0 50%;">MB</span>
<span class="t" style="left:976.15px;top:716.46px;font-size:18.0px;line-height:23px;-webkit-text-stroke:0.3px #000;transform:scaleX(0.9793);transform-origin:0 50%;">Memory</span>
<span class="t" style="left:1045.44px;top:716.46px;font-size:18.0px;line-height:23px;-webkit-text-stroke:0.3px #000;transform:scaleX(1.0154);transform-origin:0 50%;">load:</span>
<span class="t" style="left:1090.71px;top:716.46px;font-size:18.0px;line-height:23px;-webkit-text-stroke:0.3px #000;transform:scaleX(0.9811);transform-origin:0 50%;">44</span>
<span class="t" style="left:11.90px;top:739.56px;font-size:18.0px;line-height:23px;-webkit-text-stroke:0.3px #000;transform:scaleX(0.9229);transform-origin:0 50%;">Process</span>
<span class="t" style="left:77.55px;top:739.56px;font-size:18.0px;line-height:23px;-webkit-text-stroke:0.3px #000;transform:scaleX(0.9898);transform-origin:0 50%;">kernel</span>
<span class="t" style="left:131.70px;top:739.56px;font-size:18.0px;line-height:23px;-webkit-text-stroke:0.3px #000;transform:scaleX(1.0536);transform-origin:0 50%;">time:</span>
<span class="t" style="left:178.44px;top:739.56px;font-size:18.0px;line-height:23px;-webkit-text-stroke:0.3px #000;transform:scaleX(1.0160);transform-origin:0 50%;">11.875</span>
<span class="t" style="left:238.64px;top:739.56px;font-size:18.0px;line-height:23px;-webkit-text-stroke:0.3px #000;transform:scaleX(0.8936);transform-origin:0 50%;">s</span>
<span class="t" style="left:252.31px;top:739.56px;font-size:18.0px;line-height:23px;-webkit-text-stroke:0.3px #000;transform:scaleX(0.9229);transform-origin:0 50%;">Process</span>
<span class="t" style="left:317.95px;top:739.56px;font-size:18.0px;line-height:23px;-webkit-text-stroke:0.3px #000;transform:scaleX(0.9719);transform-origin:0 50%;">user</span>
<span class="t" style="left:357.61px;top:739.56px;font-size:18.0px;line-height:23px;-webkit-text-stroke:0.3px #000;transform:scaleX(1.0536);transform-origin:0 50%;">time:</span>
<span class="t" style="left:404.34px;top:739.56px;font-size:18.0px;line-height:23px;-webkit-text-stroke:0.3px #000;transform:scaleX(0.9897);transform-origin:0 50%;">107.109</span>
<span class="t" style="left:474.37px;top:739.56px;font-size:18.0px;line-height:23px;-webkit-text-stroke:0.3px #000;transform:scaleX(0.8936);transform-origin:0 50%;">s</span>
<span class="t" style="left:11.90px;top:846.96px;font-size:18.0px;line-height:23px;-webkit-text-stroke:0.3px #000;transform:scaleX(0.9398);transform-origin:0 50%;">Free</span>
<span class="t" style="left:52.31px;top:846.96px;font-size:18.0px;line-height:23px;-webkit-text-stroke:0.3px #000;transform:scaleX(1.0186);transform-origin:0 50%;">memory:</span>
<span class="t" style="left:129.25px;top:846.96px;font-size:18.0px;line-height:23px;-webkit-text-stroke:0.3px #000;transform:scaleX(0.9912);transform-origin:0 50%;">293.44</span>
<span class="t" style="left:189.46px;top:846.96px;font-size:18.0px;line-height:23px;-webkit-text-stroke:0.3px #000;transform:scaleX(0.9066);transform-origin:0 50%;">MB</span>
<span class="t" style="left:219.56px;top:846.96px;font-size:18.0px;line-height:23px;-webkit-text-stroke:0.3px #000;transform:scaleX(1.0490);transform-origin:0 50%;">Total</span>
<span class="t" style="left:265.08px;top:846.96px;font-size:18.0px;line-height:23px;-webkit-text-stroke:0.3px #000;transform:scaleX(1.0186);transform-origin:0 50%;">memory:</span>
<span class="t" style="left:342.02px;top:846.96px;font-size:18.0px;line-height:23px;-webkit-text-stroke:0.3px #000;transform:scaleX(0.9912);transform-origin:0 50%;">417.50</span>
<span class="t" style="left:402.22px;top:846.96px;font-size:18.0px;line-height:23px;-webkit-text-stroke:0.3px #000;transform:scaleX(0.9066);transform-origin:0 50%;">MB</span>
<span class="t" style="left:432.32px;top:846.96px;font-size:18.0px;line-height:23px;-webkit-text-stroke:0.3px #000;transform:scaleX(0.9457);transform-origin:0 50%;">Max</span>
<span class="t" style="left:470.12px;top:846.96px;font-size:18.0px;line-height:23px;-webkit-text-stroke:0.3px #000;transform:scaleX(1.0186);transform-origin:0 50%;">memory:</span>
<span class="t" style="left:547.06px;top:846.96px;font-size:18.0px;line-height:23px;-webkit-text-stroke:0.3px #000;transform:scaleX(0.9912);transform-origin:0 50%;">455.50</span>
<span class="t" style="left:607.26px;top:846.96px;font-size:18.0px;line-height:23px;-webkit-text-stroke:0.3px #000;transform:scaleX(0.9066);transform-origin:0 50%;">MB</span>
<span class="t" style="left:11.90px;top:1220.96px;font-size:18.0px;line-height:23px;-webkit-text-stroke:0.3px #000;transform:scaleX(0.9457);transform-origin:0 50%;">Max</span>
<span class="t" style="left:49.69px;top:1220.96px;font-size:18.0px;line-height:23px;-webkit-text-stroke:0.3px #000;transform:scaleX(1.0119);transform-origin:0 50%;">threads:</span>
<span class="t" style="left:121.14px;top:1220.96px;font-size:18.0px;line-height:23px;-webkit-text-stroke:0.3px #000;transform:scaleX(0.9811);transform-origin:0 50%;">200</span>
<span class="t" style="left:156.24px;top:1220.96px;font-size:18.0px;line-height:23px;-webkit-text-stroke:0.3px #000;transform:scaleX(0.9888);transform-origin:0 50%;">Current</span>
<span class="t" style="left:221.23px;top:1220.96px;font-size:18.0px;line-height:23px;-webkit-text-stroke:0.3px #000;transform:scaleX(1.0071);transform-origin:0 50%;">thread</span>
<span class="t" style="left:278.26px;top:1220.96px;font-size:18.0px;line-height:23px;-webkit-text-stroke:0.3px #000;transform:scaleX(1.0307);transform-origin:0 50%;">count:</span>
<span class="t" style="left:334.44px;top:1220.96px;font-size:18.0px;line-height:23px;-webkit-text-stroke:0.3px #000;transform:scaleX(0.9811);transform-origin:0 50%;">10</span>
<span class="t" style="left:359.72px;top:1220.96px;font-size:18.0px;line-height:23px;-webkit-text-stroke:0.3px #000;transform:scaleX(0.9888);transform-origin:0 50%;">Current</span>
<span class="t" style="left:424.70px;top:1220.96px;font-size:18.0px;line-height:23px;-webkit-text-stroke:0.3px #000;transform:scaleX(1.0071);transform-origin:0 50%;">thread</span>
<span class="t" style="left:481.74px;top:1220.96px;font-size:18.0px;line-height:23px;-webkit-text-stroke:0.3px #000;transform:scaleX(1.0080);transform-origin:0 50%;">busy:</span>
<span class="t" style="left:530.74px;top:1220.96px;font-size:18.0px;line-height:23px;-webkit-text-stroke:0.3px #000;transform:scaleX(0.9811);transform-origin:0 50%;">1</span>
<span class="t" style="left:546.19px;top:1220.96px;font-size:18.0px;line-height:23px;-webkit-text-stroke:0.3px #000;transform:scaleX(0.9390);transform-origin:0 50%;">Keep</span>
<span class="t" style="left:591.29px;top:1220.96px;font-size:18.0px;line-height:23px;-webkit-text-stroke:0.3px #000;transform:scaleX(0.9750);transform-origin:0 50%;">alive</span>
<span class="t" style="left:633.02px;top:1220.96px;font-size:18.0px;line-height:23px;-webkit-text-stroke:0.3px #000;transform:scaleX(0.9603);transform-origin:0 50%;">sockets</span>
<span class="t" style="left:697.25px;top:1220.96px;font-size:18.0px;line-height:23px;-webkit-text-stroke:0.3px #000;transform:scaleX(1.0307);transform-origin:0 50%;">count:</span>
<span class="t" style="left:753.43px;top:1220.96px;font-size:18.0px;line-height:23px;-webkit-text-stroke:0.3px #000;transform:scaleX(0.9811);transform-origin:0 50%;">0</span>
<span class="t" style="left:11.90px;top:1243.96px;font-size:18.0px;line-height:23px;-webkit-text-stroke:0.3px #000;transform:scaleX(0.9457);transform-origin:0 50%;">Max</span>
<span class="t" style="left:49.69px;top:1243.96px;font-size:18.0px;line-height:23px;-webkit-text-stroke:0.3px #000;transform:scaleX(0.9668);transform-origin:0 50%;">processing</span>
<span class="t" style="left:139.47px;top:1243.96px;font-size:18.0px;line-height:23px;-webkit-text-stroke:0.3px #000;transform:scaleX(1.0536);transform-origin:0 50%;">time:</span>
<span class="t" style="left:186.20px;top:1243.96px;font-size:18.0px;line-height:23px;-webkit-text-stroke:0.3px #000;transform:scaleX(0.9811);transform-origin:0 50%;">600</span>
<span class="t" style="left:221.31px;top:1243.96px;font-size:18.0px;line-height:23px;-webkit-text-stroke:0.3px #000;transform:scaleX(0.9657);transform-origin:0 50%;">ms</span>
<span class="t" style="left:250.11px;top:1243.96px;font-size:18.0px;line-height:23px;-webkit-text-stroke:0.3px #000;transform:scaleX(0.9448);transform-origin:0 50%;">Processing</span>
<span class="t" style="left:339.86px;top:1243.96px;font-size:18.0px;line-height:23px;-webkit-text-stroke:0.3px #000;transform:scaleX(1.0536);transform-origin:0 50%;">time:</span>
<span class="t" style="left:386.60px;top:1243.96px;font-size:18.0px;line-height:23px;-webkit-text-stroke:0.3px #000;transform:scaleX(0.9935);transform-origin:0 50%;">0.892</span>
<span class="t" style="left:436.97px;top:1243.96px;font-size:18.0px;line-height:23px;-webkit-text-stroke:0.3px #000;transform:scaleX(0.8936);transform-origin:0 50%;">s</span>
<span class="t" style="left:450.64px;top:1243.96px;font-size:18.0px;line-height:23px;-webkit-text-stroke:0.3px #000;transform:scaleX(0.9569);transform-origin:0 50%;">Request</span>
<span class="t" style="left:520.43px;top:1243.96px;font-size:18.0px;line-height:23px;-webkit-text-stroke:0.3px #000;transform:scaleX(1.0307);transform-origin:0 50%;">count:</span>
<span class="t" style="left:576.61px;top:1243.96px;font-size:18.0px;line-height:23px;-webkit-text-stroke:0.3px #000;transform:scaleX(0.9811);transform-origin:0 50%;">16</span>
<span class="t" style="left:601.88px;top:1243.96px;font-size:18.0px;line-height:23px;-webkit-text-stroke:0.3px #000;transform:scaleX(0.9824);transform-origin:0 50%;">Error</span>
<span class="t" style="left:646.80px;top:1243.96px;font-size:18.0px;line-height:23px;-webkit-text-stroke:0.3px #000;transform:scaleX(1.0307);transform-origin:0 50%;">count:</span>
<span class="t" style="left:702.98px;top:1243.96px;font-size:18.0px;line-height:23px;-webkit-text-stroke:0.3px #000;transform:scaleX(0.9811);transform-origin:0 50%;">0</span>
<span class="t" style="left:718.44px;top:1243.96px;font-size:18.0px;line-height:23px;-webkit-text-stroke:0.3px #000;transform:scaleX(0.9573);transform-origin:0 50%;">Bytes</span>
<span class="t" style="left:767.17px;top:1243.96px;font-size:18.0px;line-height:23px;-webkit-text-stroke:0.3px #000;transform:scaleX(0.9936);transform-origin:0 50%;">received:</span>
<span class="t" style="left:845.38px;top:1243.96px;font-size:18.0px;line-height:23px;-webkit-text-stroke:0.3px #000;transform:scaleX(0.9966);transform-origin:0 50%;">0.00</span>
<span class="t" style="left:885.93px;top:1243.96px;font-size:18.0px;line-height:23px;-webkit-text-stroke:0.3px #000;transform:scaleX(0.9066);transform-origin:0 50%;">MB</span>
<span class="t" style="left:916.03px;top:1243.96px;font-size:18.0px;line-height:23px;-webkit-text-stroke:0.3px #000;transform:scaleX(0.9573);transform-origin:0 50%;">Bytes</span>
<span class="t" style="left:964.77px;top:1243.96px;font-size:18.0px;line-height:23px;-webkit-text-stroke:0.3px #000;transform:scaleX(1.0234);transform-origin:0 50%;">sent:</span>
<span class="t" style="left:1010.34px;top:1243.96px;font-size:18.0px;line-height:23px;-webkit-text-stroke:0.3px #000;transform:scaleX(0.9966);transform-origin:0 50%;">0.07</span>
<span class="t" style="left:1050.89px;top:1243.96px;font-size:18.0px;line-height:23px;-webkit-text-stroke:0.3px #000;transform:scaleX(0.9066);transform-origin:0 50%;">MB</span>
<span class="t" style="left:11.90px;top:1482.06px;font-size:18.0px;line-height:23px;-webkit-text-stroke:0.3px #000;transform:scaleX(0.9576);transform-origin:0 50%;">P:</span>
<span class="t" style="left:33.82px;top:1482.06px;font-size:18.0px;line-height:23px;-webkit-text-stroke:0.3px #000;transform:scaleX(0.9219);transform-origin:0 50%;">Parse</span>
<span class="t" style="left:82.80px;top:1482.06px;font-size:18.0px;line-height:23px;-webkit-text-stroke:0.3px #000;transform:scaleX(0.9799);transform-origin:0 50%;">and</span>
<span class="t" style="left:117.87px;top:1482.06px;font-size:18.0px;line-height:23px;-webkit-text-stroke:0.3px #000;transform:scaleX(0.9869);transform-origin:0 50%;">prepare</span>
<span class="t" style="left:184.73px;top:1482.06px;font-size:18.0px;line-height:23px;-webkit-text-stroke:0.3px #000;transform:scaleX(0.9903);transform-origin:0 50%;">request</span>
<span class="t" style="left:249.82px;top:1482.06px;font-size:18.0px;line-height:23px;-webkit-text-stroke:0.3px #000;transform:scaleX(0.9638);transform-origin:0 50%;">S:</span>
<span class="t" style="left:271.85px;top:1482.06px;font-size:18.0px;line-height:23px;-webkit-text-stroke:0.3px #000;transform:scaleX(0.9465);transform-origin:0 50%;">Service</span>
<span class="t" style="left:334.29px;top:1482.06px;font-size:18.0px;line-height:23px;-webkit-text-stroke:0.3px #000;transform:scaleX(0.9844);transform-origin:0 50%;">F:</span>
<span class="t" style="left:355.67px;top:1482.06px;font-size:18.0px;line-height:23px;-webkit-text-stroke:0.3px #000;transform:scaleX(0.9695);transform-origin:0 50%;">Finishing</span>
<span class="t" style="left:431.14px;top:1482.06px;font-size:18.0px;line-height:23px;-webkit-text-stroke:0.3px #000;transform:scaleX(0.9746);transform-origin:0 50%;">R:</span>
<span class="t" style="left:454.31px;top:1482.06px;font-size:18.0px;line-height:23px;-webkit-text-stroke:0.3px #000;transform:scaleX(0.9417);transform-origin:0 50%;">Ready</span>
<span class="t" style="left:508.93px;top:1482.06px;font-size:18.0px;line-height:23px;-webkit-text-stroke:0.3px #000;transform:scaleX(0.9974);transform-origin:0 50%;">K:</span>
<span class="t" style="left:531.53px;top:1482.06px;font-size:18.0px;line-height:23px;-webkit-text-stroke:0.3px #000;transform:scaleX(0.9560);transform-origin:0 50%;">Keepalive</span>
<span class="t" style="left:11.90px;top:1588.96px;font-size:18.0px;line-height:23px;-webkit-text-stroke:0.3px #000;transform:scaleX(0.9457);transform-origin:0 50%;">Max</span>
<span class="t" style="left:49.69px;top:1588.96px;font-size:18.0px;line-height:23px;-webkit-text-stroke:0.3px #000;transform:scaleX(1.0119);transform-origin:0 50%;">threads:</span>
<span class="t" style="left:121.14px;top:1588.96px;font-size:18.0px;line-height:23px;-webkit-text-stroke:0.3px #000;transform:scaleX(0.9811);transform-origin:0 50%;">200</span>
<span class="t" style="left:156.24px;top:1588.96px;font-size:18.0px;line-height:23px;-webkit-text-stroke:0.3px #000;transform:scaleX(0.9888);transform-origin:0 50%;">Current</span>
<span class="t" style="left:221.23px;top:1588.96px;font-size:18.0px;line-height:23px;-webkit-text-stroke:0.3px #000;transform:scaleX(1.0071);transform-origin:0 50%;">thread</span>
<span class="t" style="left:278.26px;top:1588.96px;font-size:18.0px;line-height:23px;-webkit-text-stroke:0.3px #000;transform:scaleX(1.0307);transform-origin:0 50%;">count:</span>
<span class="t" style="left:334.44px;top:1588.96px;font-size:18.0px;line-height:23px;-webkit-text-stroke:0.3px #000;transform:scaleX(0.9811);transform-origin:0 50%;">10</span>
<span class="t" style="left:359.72px;top:1588.96px;font-size:18.0px;line-height:23px;-webkit-text-stroke:0.3px #000;transform:scaleX(0.9888);transform-origin:0 50%;">Current</span>
<span class="t" style="left:424.70px;top:1588.96px;font-size:18.0px;line-height:23px;-webkit-text-stroke:0.3px #000;transform:scaleX(1.0071);transform-origin:0 50%;">thread</span>
<span class="t" style="left:481.74px;top:1588.96px;font-size:18.0px;line-height:23px;-webkit-text-stroke:0.3px #000;transform:scaleX(1.0080);transform-origin:0 50%;">busy:</span>
<span class="t" style="left:530.74px;top:1588.96px;font-size:18.0px;line-height:23px;-webkit-text-stroke:0.3px #000;transform:scaleX(0.9811);transform-origin:0 50%;">0</span>
<span class="t" style="left:546.19px;top:1588.96px;font-size:18.0px;line-height:23px;-webkit-text-stroke:0.3px #000;transform:scaleX(0.9390);transform-origin:0 50%;">Keep</span>
<span class="t" style="left:591.29px;top:1588.96px;font-size:18.0px;line-height:23px;-webkit-text-stroke:0.3px #000;transform:scaleX(0.9750);transform-origin:0 50%;">alive</span>
<span class="t" style="left:633.02px;top:1588.96px;font-size:18.0px;line-height:23px;-webkit-text-stroke:0.3px #000;transform:scaleX(0.9603);transform-origin:0 50%;">sockets</span>
<span class="t" style="left:697.25px;top:1588.96px;font-size:18.0px;line-height:23px;-webkit-text-stroke:0.3px #000;transform:scaleX(1.0307);transform-origin:0 50%;">count:</span>
<span class="t" style="left:753.43px;top:1588.96px;font-size:18.0px;line-height:23px;-webkit-text-stroke:0.3px #000;transform:scaleX(0.9811);transform-origin:0 50%;">0</span>
<span class="t" style="left:11.90px;top:1611.96px;font-size:18.0px;line-height:23px;-webkit-text-stroke:0.3px #000;transform:scaleX(0.9457);transform-origin:0 50%;">Max</span>
<span class="t" style="left:49.69px;top:1611.96px;font-size:18.0px;line-height:23px;-webkit-text-stroke:0.3px #000;transform:scaleX(0.9668);transform-origin:0 50%;">processing</span>
<span class="t" style="left:139.47px;top:1611.96px;font-size:18.0px;line-height:23px;-webkit-text-stroke:0.3px #000;transform:scaleX(1.0536);transform-origin:0 50%;">time:</span>
<span class="t" style="left:186.20px;top:1611.96px;font-size:18.0px;line-height:23px;-webkit-text-stroke:0.3px #000;transform:scaleX(0.9811);transform-origin:0 50%;">0</span>
<span class="t" style="left:201.66px;top:1611.96px;font-size:18.0px;line-height:23px;-webkit-text-stroke:0.3px #000;transform:scaleX(0.9657);transform-origin:0 50%;">ms</span>
<span class="t" style="left:230.46px;top:1611.96px;font-size:18.0px;line-height:23px;-webkit-text-stroke:0.3px #000;transform:scaleX(0.9448);transform-origin:0 50%;">Processing</span>
<span class="t" style="left:320.21px;top:1611.96px;font-size:18.0px;line-height:23px;-webkit-text-stroke:0.3px #000;transform:scaleX(1.0536);transform-origin:0 50%;">time:</span>
<span class="t" style="left:366.94px;top:1611.96px;font-size:18.0px;line-height:23px;-webkit-text-stroke:0.3px #000;transform:scaleX(1.0028);transform-origin:0 50%;">0.0</span>
<span class="t" style="left:397.67px;top:1611.96px;font-size:18.0px;line-height:23px;-webkit-text-stroke:0.3px #000;transform:scaleX(0.8936);transform-origin:0 50%;">s</span>
<span class="t" style="left:411.34px;top:1611.96px;font-size:18.0px;line-height:23px;-webkit-text-stroke:0.3px #000;transform:scaleX(0.9569);transform-origin:0 50%;">Request</span>
<span class="t" style="left:481.12px;top:1611.96px;font-size:18.0px;line-height:23px;-webkit-text-stroke:0.3px #000;transform:scaleX(1.0307);transform-origin:0 50%;">count:</span>
<span class="t" style="left:537.30px;top:1611.96px;font-size:18.0px;line-height:23px;-webkit-text-stroke:0.3px #000;transform:scaleX(0.9811);transform-origin:0 50%;">0</span>
<span class="t" style="left:552.75px;top:1611.96px;font-size:18.0px;line-height:23px;-webkit-text-stroke:0.3px #000;transform:scaleX(0.9824);transform-origin:0 50%;">Error</span>
<span class="t" style="left:597.67px;top:1611.96px;font-size:18.0px;line-height:23px;-webkit-text-stroke:0.3px #000;transform:scaleX(1.0307);transform-origin:0 50%;">count:</span>
<span class="t" style="left:653.85px;top:1611.96px;font-size:18.0px;line-height:23px;-webkit-text-stroke:0.3px #000;transform:scaleX(0.9811);transform-origin:0 50%;">0</span>
<span class="t" style="left:669.30px;top:1611.96px;font-size:18.0px;line-height:23px;-webkit-text-stroke:0.3px #000;transform:scaleX(0.9573);transform-origin:0 50%;">Bytes</span>
<span class="t" style="left:718.04px;top:1611.96px;font-size:18.0px;line-height:23px;-webkit-text-stroke:0.3px #000;transform:scaleX(0.9936);transform-origin:0 50%;">received:</span>
<span class="t" style="left:796.24px;top:1611.96px;font-size:18.0px;line-height:23px;-webkit-text-stroke:0.3px #000;transform:scaleX(0.9966);transform-origin:0 50%;">0.00</span>
<span class="t" style="left:836.80px;top:1611.96px;font-size:18.0px;line-height:23px;-webkit-text-stroke:0.3px #000;transform:scaleX(0.9066);transform-origin:0 50%;">MB</span>
<span class="t" style="left:866.90px;top:1611.96px;font-size:18.0px;line-height:23px;-webkit-text-stroke:0.3px #000;transform:scaleX(0.9573);transform-origin:0 50%;">Bytes</span>
<span class="t" style="left:915.64px;top:1611.96px;font-size:18.0px;line-height:23px;-webkit-text-stroke:0.3px #000;transform:scaleX(1.0234);transform-origin:0 50%;">sent:</span>
<span class="t" style="left:961.21px;top:1611.96px;font-size:18.0px;line-height:23px;-webkit-text-stroke:0.3px #000;transform:scaleX(0.9966);transform-origin:0 50%;">0.00</span>
<span class="t" style="left:1001.76px;top:1611.96px;font-size:18.0px;line-height:23px;-webkit-text-stroke:0.3px #000;transform:scaleX(0.9066);transform-origin:0 50%;">MB</span>
<span class="t" style="left:11.90px;top:1709.16px;font-size:18.0px;line-height:23px;-webkit-text-stroke:0.3px #000;transform:scaleX(0.9576);transform-origin:0 50%;">P:</span>
<span class="t" style="left:33.82px;top:1709.16px;font-size:18.0px;line-height:23px;-webkit-text-stroke:0.3px #000;transform:scaleX(0.9219);transform-origin:0 50%;">Parse</span>
<span class="t" style="left:82.80px;top:1709.16px;font-size:18.0px;line-height:23px;-webkit-text-stroke:0.3px #000;transform:scaleX(0.9799);transform-origin:0 50%;">and</span>
<span class="t" style="left:117.87px;top:1709.16px;font-size:18.0px;line-height:23px;-webkit-text-stroke:0.3px #000;transform:scaleX(0.9869);transform-origin:0 50%;">prepare</span>
<span class="t" style="left:184.73px;top:1709.16px;font-size:18.0px;line-height:23px;-webkit-text-stroke:0.3px #000;transform:scaleX(0.9903);transform-origin:0 50%;">request</span>
<span class="t" style="left:249.82px;top:1709.16px;font-size:18.0px;line-height:23px;-webkit-text-stroke:0.3px #000;transform:scaleX(0.9638);transform-origin:0 50%;">S:</span>
<span class="t" style="left:271.85px;top:1709.16px;font-size:18.0px;line-height:23px;-webkit-text-stroke:0.3px #000;transform:scaleX(0.9465);transform-origin:0 50%;">Service</span>
<span class="t" style="left:334.29px;top:1709.16px;font-size:18.0px;line-height:23px;-webkit-text-stroke:0.3px #000;transform:scaleX(0.9844);transform-origin:0 50%;">F:</span>
<span class="t" style="left:355.67px;top:1709.16px;font-size:18.0px;line-height:23px;-webkit-text-stroke:0.3px #000;transform:scaleX(0.9695);transform-origin:0 50%;">Finishing</span>
<span class="t" style="left:431.14px;top:1709.16px;font-size:18.0px;line-height:23px;-webkit-text-stroke:0.3px #000;transform:scaleX(0.9746);transform-origin:0 50%;">R:</span>
<span class="t" style="left:454.31px;top:1709.16px;font-size:18.0px;line-height:23px;-webkit-text-stroke:0.3px #000;transform:scaleX(0.9417);transform-origin:0 50%;">Ready</span>
<span class="t" style="left:508.93px;top:1709.16px;font-size:18.0px;line-height:23px;-webkit-text-stroke:0.3px #000;transform:scaleX(0.9974);transform-origin:0 50%;">K:</span>
<span class="t" style="left:531.53px;top:1709.16px;font-size:18.0px;line-height:23px;-webkit-text-stroke:0.3px #000;transform:scaleX(0.9560);transform-origin:0 50%;">Keepalive</span>
<span class="t" style="left:336.90px;top:889.08px;font-size:24px;line-height:31px;font-weight:700;">Memory Pool</span>
<span class="t" style="left:327.52px;top:924.28px;font-size:24px;line-height:31px;">PS Eden Space</span>
<span class="t" style="left:348.22px;top:959.18px;font-size:24px;line-height:31px;">PS Old Gen</span>
<span class="t" style="left:311.54px;top:994.08px;font-size:24px;line-height:31px;">PS Survivor Space</span>
<span class="t" style="left:345.54px;top:1028.98px;font-size:24px;line-height:31px;">Code Cache</span>
<span class="t" style="left:273.52px;top:1063.88px;font-size:24px;line-height:31px;">Compressed Class Space</span>
<span class="t" style="left:353.55px;top:1098.78px;font-size:24px;line-height:31px;">Metaspace</span>
<span class="t" style="left:1072.13px;top:889.08px;font-size:24px;line-height:31px;font-weight:700;">Type</span>
<span class="t" style="left:1023.89px;top:924.28px;font-size:24px;line-height:31px;">Heap memory</span>
<span class="t" style="left:1023.89px;top:959.18px;font-size:24px;line-height:31px;">Heap memory</span>
<span class="t" style="left:1023.89px;top:994.08px;font-size:24px;line-height:31px;">Heap memory</span>
<span class="t" style="left:999.88px;top:1028.98px;font-size:24px;line-height:31px;">Non-heap memory</span>
<span class="t" style="left:999.88px;top:1063.88px;font-size:24px;line-height:31px;">Non-heap memory</span>
<span class="t" style="left:999.88px;top:1098.78px;font-size:24px;line-height:31px;">Non-heap memory</span>
<span class="t" style="left:1524.96px;top:889.08px;font-size:24px;line-height:31px;font-weight:700;">Initial</span>
<span class="t" style="left:1504.93px;top:924.28px;font-size:24px;line-height:31px;">64.00 MB</span>
<span class="t" style="left:1498.26px;top:959.18px;font-size:24px;line-height:31px;">171.00 MB</span>
<span class="t" style="left:1504.93px;top:994.08px;font-size:24px;line-height:31px;">10.50 MB</span>
<span class="t" style="left:1511.60px;top:1028.98px;font-size:24px;line-height:31px;">2.43 MB</span>
<span class="t" style="left:1511.60px;top:1063.88px;font-size:24px;line-height:31px;">0.00 MB</span>
<span class="t" style="left:1511.60px;top:1098.78px;font-size:24px;line-height:31px;">0.00 MB</span>
<span class="t" style="left:1869.23px;top:889.08px;font-size:24px;line-height:31px;font-weight:700;">Total</span>
<span class="t" style="left:1839.85px;top:924.28px;font-size:24px;line-height:31px;">119.50 MB</span>
<span class="t" style="left:1838.96px;top:959.18px;font-size:24px;line-height:31px;">274.50 MB</span>
<span class="t" style="left:1845.63px;top:994.08px;font-size:24px;line-height:31px;">23.50 MB</span>
<span class="t" style="left:1845.63px;top:1028.98px;font-size:24px;line-height:31px;">44.93 MB</span>
<span class="t" style="left:1845.63px;top:1063.88px;font-size:24px;line-height:31px;">14.12 MB</span>
<span class="t" style="left:1838.96px;top:1098.78px;font-size:24px;line-height:31px;">105.37 MB</span>
<span class="t" style="left:2201.00px;top:889.08px;font-size:24px;line-height:31px;font-weight:700;">Maximum</span>
<span class="t" style="left:2198.31px;top:924.28px;font-size:24px;line-height:31px;">120.00 MB</span>
<span class="t" style="left:2198.31px;top:959.18px;font-size:24px;line-height:31px;">341.50 MB</span>
<span class="t" style="left:2204.98px;top:994.08px;font-size:24px;line-height:31px;">23.50 MB</span>
<span class="t" style="left:2198.31px;top:1028.98px;font-size:24px;line-height:31px;">240.00 MB</span>
<span class="t" style="left:2191.64px;top:1063.88px;font-size:24px;line-height:31px;">1024.00 MB</span>
<span class="t" style="left:2207.66px;top:1098.78px;font-size:24px;line-height:31px;">-0.00 MB</span>
<span class="t" style="left:2686.66px;top:889.08px;font-size:24px;line-height:31px;font-weight:700;">Used</span>
<span class="t" style="left:2642.64px;top:924.28px;font-size:24px;line-height:31px;">0.65 MB (0%)</span>
<span class="t" style="left:2622.62px;top:959.18px;font-size:24px;line-height:31px;">103.43 MB (30%)</span>
<span class="t" style="left:2629.29px;top:994.08px;font-size:24px;line-height:31px;">19.96 MB (84%)</span>
<span class="t" style="left:2629.29px;top:1028.98px;font-size:24px;line-height:31px;">42.26 MB (17%)</span>
<span class="t" style="left:2635.96px;top:1063.88px;font-size:24px;line-height:31px;">13.73 MB (1%)</span>
<span class="t" style="left:2657.96px;top:1098.78px;font-size:24px;line-height:31px;">103.83 MB</span>
<span class="t" style="left:72.22px;top:1286.38px;font-size:24px;line-height:31px;font-weight:700;">Stage</span>
<span class="t" style="left:96.23px;top:1321.38px;font-size:24px;line-height:31px;font-weight:700;">R</span>
<span class="t" style="left:96.89px;top:1356.28px;font-size:24px;line-height:31px;font-weight:700;">S</span>
<span class="t" style="left:96.23px;top:1391.18px;font-size:24px;line-height:31px;font-weight:700;">R</span>
<span class="t" style="left:96.23px;top:1426.08px;font-size:24px;line-height:31px;font-weight:700;">R</span>
<span class="t" style="left:260.10px;top:1286.38px;font-size:24px;line-height:31px;font-weight:700;">Time</span>
<span class="t" style="left:281.22px;top:1321.38px;font-size:24px;line-height:31px;">?</span>
<span class="t" style="left:255.22px;top:1356.28px;font-size:24px;line-height:31px;">29 ms</span>
<span class="t" style="left:281.22px;top:1391.18px;font-size:24px;line-height:31px;">?</span>
<span class="t" style="left:281.22px;top:1426.08px;font-size:24px;line-height:31px;">?</span>
<span class="t" style="left:446.94px;top:1286.38px;font-size:24px;line-height:31px;font-weight:700;">B Sent</span>
<span class="t" style="left:478.27px;top:1321.38px;font-size:24px;line-height:31px;">?</span>
<span class="t" style="left:458.93px;top:1356.28px;font-size:24px;line-height:31px;">0 KB</span>
<span class="t" style="left:478.27px;top:1391.18px;font-size:24px;line-height:31px;">?</span>
<span class="t" style="left:478.27px;top:1426.08px;font-size:24px;line-height:31px;">?</span>
<span class="t" style="left:662.66px;top:1286.38px;font-size:24px;line-height:31px;font-weight:700;">B Recv</span>
<span class="t" style="left:696.67px;top:1321.38px;font-size:24px;line-height:31px;">?</span>
<span class="t" style="left:677.33px;top:1356.28px;font-size:24px;line-height:31px;">0 KB</span>
<span class="t" style="left:696.67px;top:1391.18px;font-size:24px;line-height:31px;">?</span>
<span class="t" style="left:696.67px;top:1426.08px;font-size:24px;line-height:31px;">?</span>
<span class="t" style="left:995.19px;top:1286.38px;font-size:24px;line-height:31px;font-weight:700;">Client (Forwarded)</span>
<span class="t" style="left:1094.52px;top:1321.38px;font-size:24px;line-height:31px;">?</span>
<span class="t" style="left:1051.15px;top:1356.28px;font-size:24px;line-height:31px;">127.0.0.1</span>
<span class="t" style="left:1094.52px;top:1391.18px;font-size:24px;line-height:31px;">?</span>
<span class="t" style="left:1094.52px;top:1426.08px;font-size:24px;line-height:31px;">?</span>
<span class="t" style="left:1524.41px;top:1286.38px;font-size:24px;line-height:31px;font-weight:700;">Client (Actual)</span>
<span class="t" style="left:1599.07px;top:1321.38px;font-size:24px;line-height:31px;">?</span>
<span class="t" style="left:1555.70px;top:1356.28px;font-size:24px;line-height:31px;">127.0.0.1</span>
<span class="t" style="left:1599.07px;top:1391.18px;font-size:24px;line-height:31px;">?</span>
<span class="t" style="left:1599.07px;top:1426.08px;font-size:24px;line-height:31px;">?</span>
<span class="t" style="left:1921.53px;top:1286.38px;font-size:24px;line-height:31px;font-weight:700;">VHost</span>
<span class="t" style="left:1949.52px;top:1321.38px;font-size:24px;line-height:31px;">?</span>
<span class="t" style="left:1908.83px;top:1356.28px;font-size:24px;line-height:31px;">localhost</span>
<span class="t" style="left:1949.52px;top:1391.18px;font-size:24px;line-height:31px;">?</span>
<span class="t" style="left:1949.52px;top:1426.08px;font-size:24px;line-height:31px;">?</span>
<span class="t" style="left:2489.26px;top:1286.38px;font-size:24px;line-height:31px;font-weight:700;">Request</span>
<span class="t" style="left:2088.72px;top:1356.28px;font-size:24px;line-height:31px;">GET /manager/status HTTP/1.1</span>
<span class="t" style="left:102.22px;top:1654.38px;font-size:24px;line-height:31px;font-weight:700;">Stage</span>
<span class="t" style="left:332.55px;top:1654.38px;font-size:24px;line-height:31px;font-weight:700;">Time</span>
<span class="t" style="left:566.39px;top:1654.38px;font-size:24px;line-height:31px;font-weight:700;">B Sent</span>
<span class="t" style="left:853.16px;top:1654.38px;font-size:24px;line-height:31px;font-weight:700;">B Recv</span>
<span class="t" style="left:1315.79px;top:1654.38px;font-size:24px;line-height:31px;font-weight:700;">Client (Forwarded)</span>
<span class="t" style="left:2010.96px;top:1654.38px;font-size:24px;line-height:31px;font-weight:700;">Client (Actual)</span>
<span class="t" style="left:2478.13px;top:1654.38px;font-size:24px;line-height:31px;font-weight:700;">VHost</span>
<span class="t" style="left:2766.66px;top:1654.38px;font-size:24px;line-height:31px;font-weight:700;">Request</span>
<svg width="2962" height="1732" viewBox="0 0 2962 1732" style="left:0;top:0;pointer-events:none">
<defs><filter id="sh" x="-5%" y="-5%" width="110%" height="110%"><feGaussianBlur in="SourceAlpha" stdDeviation="2.2"/><feOffset dx="-1" dy="3"/><feComponentTransfer><feFuncA type="linear" slope="0.45"/></feComponentTransfer><feMerge><feMergeNode/><feMergeNode in="SourceGraphic"/></feMerge></filter></defs>
<g filter="url(#sh)" fill="#e9504b">
<path d="M170.8,464.1 L195.4,481.8 L603.4,787.5 L982.8,1072.0 A5.5,5.5 0 0 1 976.2,1080.8 L596.6,796.6 L188.6,490.8 L164.8,472.1 Z"/>
<polygon points="145,453.5 176.1,456.6 158.5,480.2"/>
<polygon points="138.9,437.4 171,439.5 149.3,464"/>
</g></svg>
</body></html>
